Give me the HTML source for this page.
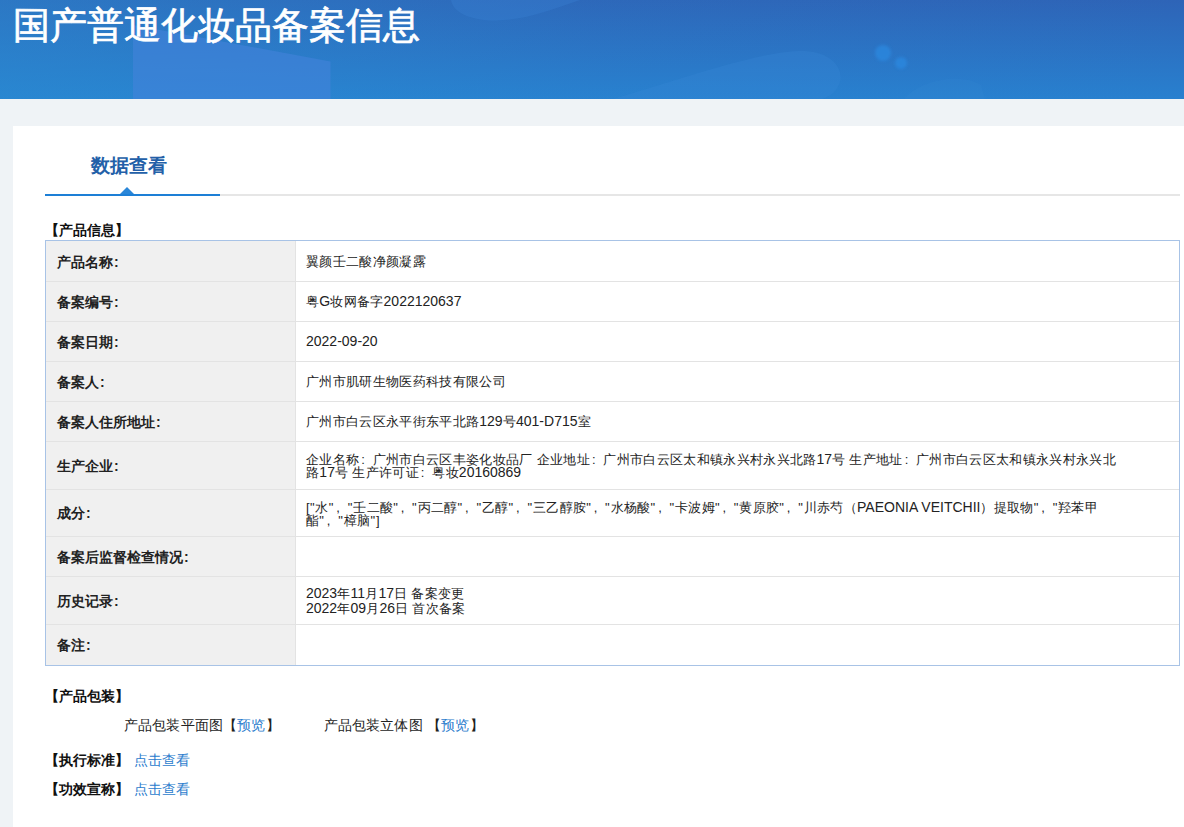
<!DOCTYPE html>
<html><head><meta charset="utf-8">
<style>
*{margin:0;padding:0;box-sizing:border-box}
html,body{width:1184px;height:827px;overflow:hidden;background:#eff3f6;font-family:"Liberation Sans",sans-serif;color:#333}
.hdr{position:absolute;left:0;top:0;width:1184px;height:99px;background:#2b78c6;overflow:hidden}
.hdr svg{position:absolute;left:0;top:0}
.title{position:absolute;left:13px;top:3px;font-size:37px;line-height:46px;color:#fff;white-space:nowrap;-webkit-text-stroke:0.7px #fff}
.card{position:absolute;left:13px;top:126px;width:1200px;height:720px;background:#fff}
.tab{position:absolute;left:91px;top:153px;font-size:19px;line-height:26px;font-weight:bold;color:#2360a8;white-space:nowrap}
.tline{position:absolute;left:45px;top:194px;width:1135px;height:2px;background:#e6e6e6}
.tact{position:absolute;left:45px;top:194px;width:175px;height:2px;background:#1d7fd6}
.tri{position:absolute;left:119.5px;top:187px;width:0;height:0;border-left:7px solid transparent;border-right:7px solid transparent;border-bottom:7.5px solid #2a86d8}
.sec{position:absolute;font-size:14px;font-weight:bold;color:#111;white-space:nowrap;line-height:16px}
table{position:absolute;left:45px;top:240px;width:1135px;border-collapse:collapse;border:1px solid #a8c3e6}
td{border:1px solid #e3e3e3;font-size:13px;letter-spacing:0.33px;line-height:14px;color:#222;vertical-align:middle;white-space:nowrap}
td.l{width:250px;font-size:14px;letter-spacing:0;border-left-color:#a8c3e6;background:#f0f0f0;font-weight:bold;padding-left:11px;color:#222}
td.v{padding-left:10px;border-right-color:#a8c3e6}
tr:first-child td{border-top-color:#a8c3e6}
tr:last-child td{border-bottom-color:#a8c3e6}
.n{font-size:14px;letter-spacing:0;font-weight:normal}
i.q{font-style:normal;letter-spacing:0.9px}
.t2{line-height:13px}
.r1 td{padding-top:2px}
.t3{line-height:13px;padding-top:2px}
.c{margin-left:1px}
i.p{font-style:normal;display:inline-block;width:13.33px;letter-spacing:0;text-indent:2px}
.pk{position:absolute;font-size:14px;line-height:16px;color:#222;white-space:nowrap}
.lk{color:#2b7ccd}
</style></head><body>
<div class="hdr">
<svg width="1184" height="99" viewBox="0 0 1184 99">
<defs>
<linearGradient id="g1" x1="0" y1="0" x2="0" y2="1"><stop offset="0" stop-color="#2e64b7"/><stop offset="1" stop-color="#2880cf"/></linearGradient>
<linearGradient id="g2" x1="0" y1="0" x2="1" y2="0"><stop offset="0" stop-color="#2a90d4" stop-opacity="0.45"/><stop offset="0.5" stop-color="#2a90d4" stop-opacity="0.1"/><stop offset="1" stop-color="#2a90d4" stop-opacity="0"/></linearGradient>
<filter id="bl" x="-50%" y="-50%" width="200%" height="200%"><feGaussianBlur stdDeviation="1.6"/></filter>
</defs>
<rect width="1184" height="99" fill="url(#g1)"/>
<rect width="1184" height="99" fill="url(#g2)"/>
<polygon points="133,25 330.5,61.5 330.5,99 133,99" fill="#4684dc" opacity="0.55"/>
<path d="M451,0 C453,13 472,21 497,20.5 C525,20 550,10 580,0 Z" fill="#3a86d6" opacity="0.3"/>
<path d="M613,99 C680,80 760,50 805,51 C848,54 850,90 822,99 Z" fill="#3a8ad8" opacity="0.28"/>
<path d="M904,99 C920,80 960,72 981,85 L985,99 Z" fill="#3a8ad8" opacity="0.15"/>
<circle cx="883" cy="53" r="8" fill="#2b8ae2" opacity="0.7" filter="url(#bl)"/>
<circle cx="901" cy="63" r="6" fill="#2b8ae2" opacity="0.7" filter="url(#bl)"/>
</svg>
<div class="title">国产普通化妆品备案信息</div>
</div>
<div class="card"></div>
<div class="tab">数据查看</div>
<div class="tline"></div>
<div class="tact"></div>
<div class="tri"></div>
<div class="sec" style="left:45px;top:222px">【产品信息】</div>
<table>
<tr style="height:41px" class=r1><td class="l">产品名称<span class=c>:</span></td><td class="v">翼颜壬二酸净颜凝露</td></tr>
<tr style="height:40px"><td class="l">备案编号<span class=c>:</span></td><td class="v">粤<b class=n>G</b>妆网备字<b class=n>2022120637</b></td></tr>
<tr style="height:40px"><td class="l">备案日期<span class=c>:</span></td><td class="v"><b class=n>2022-09-20</b></td></tr>
<tr style="height:40px"><td class="l">备案人<span class=c>:</span></td><td class="v">广州市肌研生物医药科技有限公司</td></tr>
<tr style="height:40px"><td class="l">备案人住所地址<span class=c>:</span></td><td class="v">广州市白云区永平街东平北路<b class=n>129</b>号<b class=n>401-D715</b>室</td></tr>
<tr style="height:48px"><td class="l">生产企业<span class=c>:</span></td><td class="v t2">企业名称<i class=p>:</i>广州市白云区丰姿化妆品厂 企业地址<i class=p>:</i>广州市白云区太和镇永兴村永兴北路<b class=n>17</b>号 生产地址<i class=p>:</i>广州市白云区太和镇永兴村永兴北<br>路<b class=n>17</b>号 生产许可证<i class=p>:</i>粤妆<b class=n>20160869</b></td></tr>
<tr style="height:47px"><td class="l">成分<span class=c>:</span></td><td class="v t3">[<i class=q>"</i>水<i class=q>"</i><i class=p>,</i><i class=q>"</i>壬二酸<i class=q>"</i><i class=p>,</i><i class=q>"</i>丙二醇<i class=q>"</i><i class=p>,</i><i class=q>"</i>乙醇<i class=q>"</i><i class=p>,</i><i class=q>"</i>三乙醇胺<i class=q>"</i><i class=p>,</i><i class=q>"</i>水杨酸<i class=q>"</i><i class=p>,</i><i class=q>"</i>卡波姆<i class=q>"</i><i class=p>,</i><i class=q>"</i>黄原胶<i class=q>"</i><i class=p>,</i><i class=q>"</i>川赤芍（<b class=n>PAEONIA VEITCHII</b>）提取物<i class=q>"</i><i class=p>,</i><i class=q>"</i>羟苯甲<br>酯<i class=q>"</i><i class=p>,</i><i class=q>"</i>樟脑<i class=q>"</i>]</td></tr>
<tr style="height:40px"><td class="l">备案后监督检查情况<span class=c>:</span></td><td class="v"></td></tr>
<tr style="height:48px"><td class="l">历史记录<span class=c>:</span></td><td class="v"><b class=n>2023</b>年<b class=n>11</b>月<b class=n>17</b>日 备案变更<br><b class=n>2022</b>年<b class=n>09</b>月<b class=n>26</b>日 首次备案</td></tr>
<tr style="height:41px"><td class="l">备注<span class=c>:</span></td><td class="v"></td></tr>
</table>
<div style="position:absolute;left:45px;top:240px;width:1135px;height:426px;border:1px solid #a8c3e6"></div>
<div class="sec" style="left:45px;top:688px">【产品包装】</div>
<div class="pk" style="left:124px;top:717px;letter-spacing:0.15px">产品包装平面图【<span class="lk">预览</span>】</div>
<div class="pk" style="left:323.5px;top:717px;letter-spacing:0.2px">产品包装立体图 【<span class="lk">预览</span>】</div>
<div class="sec" style="left:45px;top:752px">【执行标准】</div>
<div class="pk lk" style="left:134px;top:752px">点击查看</div>
<div class="sec" style="left:45px;top:781px">【功效宣称】</div>
<div class="pk lk" style="left:134px;top:781px">点击查看</div>
</body></html>
